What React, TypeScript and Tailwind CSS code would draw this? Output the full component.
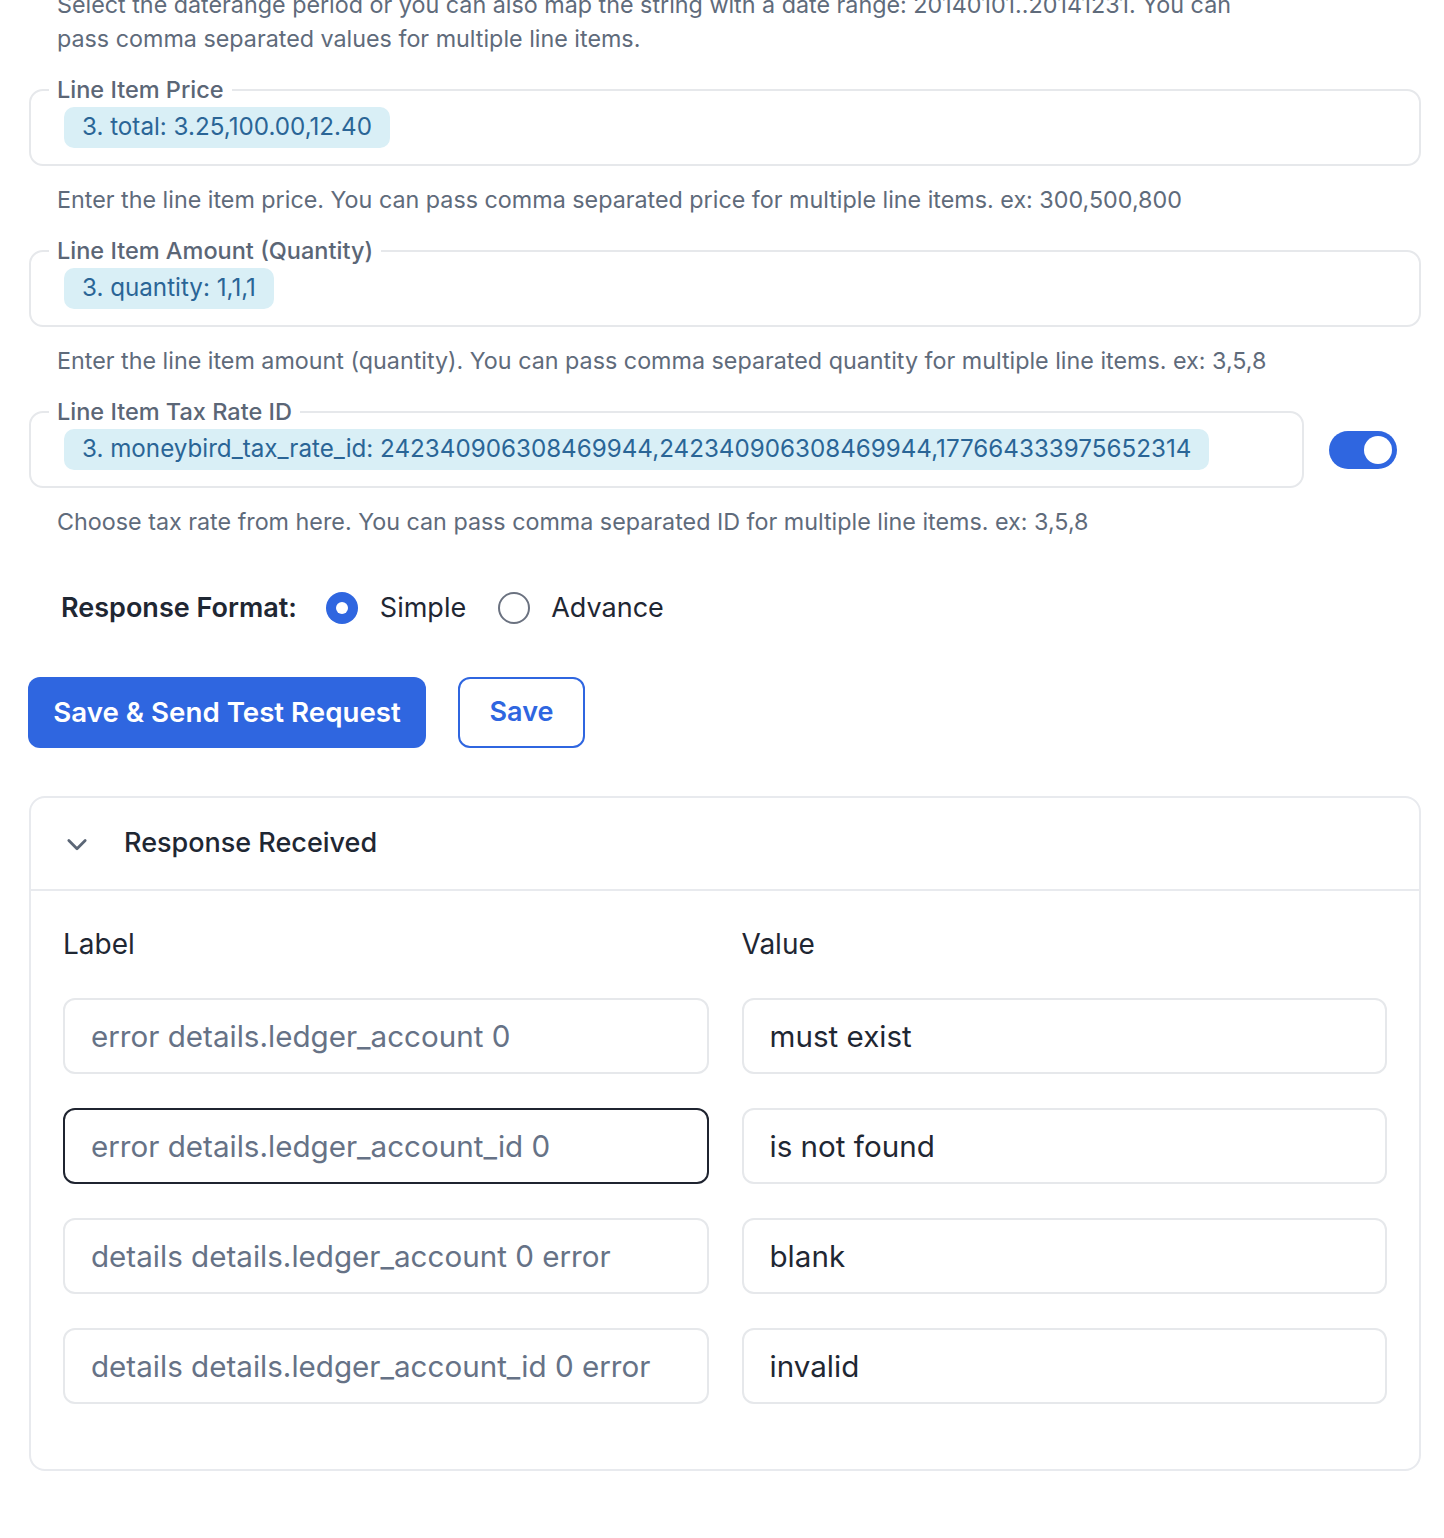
import React from "react";

const font = { fontFamily: "Inter, 'Liberation Sans', sans-serif" };

function Chip({ children }: { children: React.ReactNode }) {
  return (
    <span className="inline-flex h-[41px] items-center rounded-[10px] bg-[#d9eff6] px-[18px] text-[24.2px] text-[#2a6596]">
      {children}
    </span>
  );
}

function Field({ legend, chip }: { legend: string; chip: string }) {
  return (
    <fieldset className="rounded-[14px] border-2 border-[#e6e8eb] px-[33px] pb-[16px] pt-0">
      <legend className="-ml-[15px] px-2 text-[23.5px] leading-[30px] font-medium text-[#5b6676]">{legend}</legend>
      <div className="mt-[2px] flex">
        <Chip>{chip}</Chip>
      </div>
    </fieldset>
  );
}

function Help({ children }: { children: React.ReactNode }) {
  return <p className="mt-[17px] pl-[28px] text-[23.3px] leading-[34px] text-[#5f6b7b]">{children}</p>;
}

function Input({ text, dark, focused }: { text: string; dark?: boolean; focused?: boolean }) {
  return (
    <div
      className={
        "flex h-[76px] items-center rounded-[12px] px-[26px] text-[29.6px] " +
        (focused ? "border-2 border-[#1f2430] " : "border-2 border-[#e6e8eb] ") +
        (dark ? "text-[#1f2733]" : "text-[#667286]")
      }
    >
      {text}
    </div>
  );
}

export default function App() {
  const rows = [
    ["error details.ledger_account 0", "must exist"],
    ["error details.ledger_account_id 0", "is not found"],
    ["details details.ledger_account 0 error", "blank"],
    ["details details.ledger_account_id 0 error", "invalid"],
  ];
  return (
    <div style={font} className="min-h-[1538px] bg-white pl-[29px] pr-[23px] pb-10">
      <p className="-mt-[12px] pl-[28px] text-[23.3px] leading-[34px] text-[#5f6b7b]">
        Select the daterange period or you can also map the string with a date range: 20140101..20141231. You can
        <br />
        pass comma separated values for multiple line items.
      </p>

      <div className="mt-[19px]">
        <Field legend="Line Item Price" chip="3. total: 3.25,100.00,12.40" />
        <Help>Enter the line item price. You can pass comma separated price for multiple line items. ex: 300,500,800</Help>
      </div>

      <div className="mt-[19px]">
        <Field legend="Line Item Amount (Quantity)" chip="3. quantity: 1,1,1" />
        <Help>Enter the line item amount (quantity). You can pass comma separated quantity for multiple line items. ex: 3,5,8</Help>
      </div>

      <div className="mt-[19px]">
        <div className="flex items-center gap-[25px]">
          <div className="flex-1">
            <Field
              legend="Line Item Tax Rate ID"
              chip="3. moneybird_tax_rate_id: 242340906308469944,242340906308469944,177664333975652314"
            />
          </div>
          <div className="mr-[24px] mt-[15px] flex h-[38px] w-[68px] items-center justify-end rounded-full bg-[#2f66e0] pr-[5px]">
            <div className="h-[28px] w-[28px] rounded-full bg-white" />
          </div>
        </div>
        <Help>Choose tax rate from here. You can pass comma separated ID for multiple line items. ex: 3,5,8</Help>
      </div>

      <div className="mt-[52px] flex h-[34px] items-center pl-[32px] text-[27px] text-[#1f2733]">
        <span className="font-semibold">Response Format:</span>
        <span className="ml-[29px] flex h-[32px] w-[32px] items-center justify-center rounded-full bg-[#2f66e0]">
          <span className="h-[12px] w-[12px] rounded-full bg-white" />
        </span>
        <span className="ml-[22px]">Simple</span>
        <span className="ml-[32px] h-[32px] w-[32px] rounded-full border-2 border-[#6b7280]" />
        <span className="ml-[21px]">Advance</span>
      </div>

      <div className="mt-[52px] flex items-center gap-[32px]">
        <button className="-ml-[1px] h-[71px] w-[398px] rounded-[12px] bg-[#2f66e0] text-[27.7px] font-semibold text-white">
          Save &amp; Send Test Request
        </button>
        <button className="h-[71px] w-[127px] rounded-[12px] border-2 border-[#2f66e0] bg-white text-[27px] font-semibold text-[#2f66e0]">
          Save
        </button>
      </div>

      <div className="mt-[48px] rounded-[16px] border-2 border-[#e8eaee]">
        <div className="flex h-[93px] items-center border-b-2 border-[#e8eaee] pl-[32px]">
          <svg width="28" height="28" viewBox="0 0 24 24" fill="none" stroke="#5b6676" strokeWidth="2.4" strokeLinecap="round" strokeLinejoin="round">
            <path d="M5 9l7 7 7-7" />
          </svg>
          <span className="ml-[33px] text-[27px] font-medium text-[#1f2733]">Response Received</span>
        </div>
        <div className="px-[32px] pb-[65px] pt-[36px]">
          <div className="grid grid-cols-2 gap-x-[33px]">
            <div className="text-[28px] leading-[34px] text-[#1f2733]">Label</div>
            <div className="text-[28px] leading-[34px] text-[#1f2733]">Value</div>
          </div>
          <div className="mt-[37px] grid grid-cols-2 gap-x-[33px] gap-y-[34px]">
            {rows.map(([l, v], i) => (
              <React.Fragment key={i}>
                <Input text={l} focused={i === 1} />
                <Input text={v} dark />
              </React.Fragment>
            ))}
          </div>
        </div>
      </div>
    </div>
  );
}
